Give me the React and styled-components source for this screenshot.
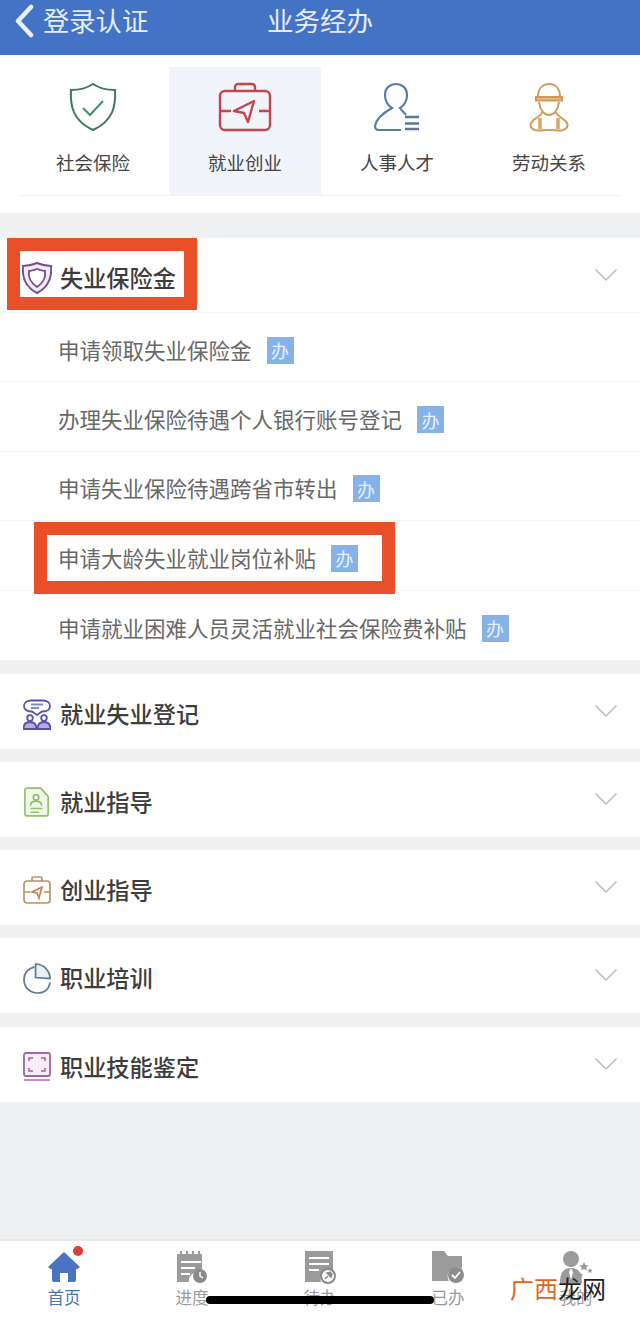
import React from "react";
import styled, { createGlobalStyle } from "styled-components";

const Global = createGlobalStyle`
  html, body { margin: 0; padding: 0; background: #eef0f2; }
  * { box-sizing: border-box; }
  body { font-family: "Noto Sans CJK SC", "Noto Sans", sans-serif; }
`;

const Page = styled.div`
  position: relative;
  width: 640px;
  height: 1317px;
  overflow: hidden;
  display: flex;
  flex-direction: column;
  background: #eef0f2;
`;

const Header = styled.header`
  height: 55px;
  flex: none;
  display: grid;
  grid-template-columns: 1fr auto 1fr;
  align-items: start;
  background: #4473c5;
  color: #e4ecf8;
  font-size: 26.3px;
  line-height: 40px;
`;
const Back = styled.div`
  display: flex;
  align-items: flex-start;
  gap: 9px;
  padding-left: 15px;
  svg { margin-top: 4px; }
`;
const Title = styled.div`
  font-size: 26.5px;
`;

const TabPanel = styled.section`
  flex: none;
  height: 158px;
  background: #fff;
  padding-top: 12px;
  margin-bottom: 25px;
`;
const Tabs = styled.div`
  display: grid;
  grid-template-columns: repeat(4, 152px);
  padding-left: 17px;
`;
const Tab = styled.div`
  height: 128px;
  display: flex;
  flex-direction: column;
  align-items: center;
  padding-top: 15px;
  background: ${(p) => (p.$active ? "#f1f4fb" : "transparent")};
  color: #444;
  font-size: 18.5px;
  line-height: 26px;
  svg { display: block; margin-bottom: 17px; }
`;
const TabRule = styled.div`
  height: 1px;
  margin: 0 20px;
  background: #f0f1f3;
`;

const Section = styled.section`
  flex: none;
  background: #fff;
  margin-bottom: ${(p) => p.$gap}px;
`;
const SectionHead = styled.div`
  height: 75px;
  display: flex;
  align-items: center;
  padding: 0 22px;
  gap: 8px;
  color: #3d3d3d;
  font-size: 23.2px;
  font-weight: 500;
  border-bottom: ${(p) => (p.$open ? "1px solid #f3f4f5" : "none")};
  svg.chev { flex: none; margin-left: auto; }
`;
const LeadSlot = styled.span`
  flex: none;
  width: 30px;
  display: flex;
  justify-content: center;
  margin-top: 6px;
`;
const HeadText = styled.span`
  margin-top: 4px;
`;
const Row = styled.div`
  height: 69.4px;
  display: flex;
  align-items: center;
  gap: 15px;
  padding: 6px 0 0 58px;
  color: #686868;
  font-size: 21.5px;
  border-bottom: 1px solid #f3f4f5;
  &:last-child { border-bottom: none; }
`;
const RowText = styled.span`
  margin-top: -2px;
`;
const Badge = styled.span`
  width: 27px;
  height: 27px;
  display: flex;
  align-items: center;
  justify-content: center;
  background: #85b3e8;
  color: #e8f1fb;
  font-size: 18px;
  line-height: 1;
`;

const Filler = styled.div`
  flex: 1;
`;

const TabBar = styled.nav`
  flex: none;
  height: 78px;
  display: grid;
  grid-template-columns: repeat(5, 128px);
  background: #fff;
  border-top: 2px solid #e9e9e9;
`;
const NavItem = styled.div`
  position: relative;
  display: flex;
  flex-direction: column;
  align-items: center;
  padding-top: 9px;
  color: ${(p) => (p.$active ? "#4a76b8" : "#9a9a9a")};
  font-size: 16.5px;
  line-height: 22px;
  svg { display: block; margin-bottom: 2px; }
`;
const Dot = styled.span`
  position: absolute;
  left: 73px;
  top: 5px;
  width: 10px;
  height: 10px;
  border-radius: 50%;
  background: #d5413a;
`;

const Callout = styled.div`
  position: absolute;
  left: ${(p) => p.$x}px;
  top: ${(p) => p.$y}px;
  width: ${(p) => p.$w}px;
  height: ${(p) => p.$h}px;
  border: 13px solid #e8502a;
`;
const HomeBar = styled.div`
  position: absolute;
  left: 206px;
  top: 1296px;
  width: 228px;
  height: 8px;
  border-radius: 4px;
  background: #000;
`;
const Watermark = styled.div`
  position: absolute;
  left: 510px;
  top: 1271px;
  font-size: 24px;
  line-height: 34px;
  color: #222;
  white-space: nowrap;
`;
const Orange = styled.span`
  color: #e0651f;
`;

const Chevron = () => (
  <svg className="chev" width="24" height="14" viewBox="0 0 24 14" fill="none" stroke="#bcbcbc" strokeWidth="1.5">
    <path d="M1.5 1.5 12 12 22.5 1.5" />
  </svg>
);

const ShieldTab = () => (
  <svg width="48" height="50" viewBox="0 0 48 50" fill="none" stroke="#3f7a5c" strokeWidth="2">
    <path d="M24 2 C30 6 38 8 46 8 C47 24 44 39 24 48 C4 39 1 24 2 8 C10 8 18 6 24 2Z" />
    <path d="M14 26 L21 33 L34 19" stroke="#4b8a68" />
  </svg>
);
const CaseTab = () => (
  <svg width="54" height="50" viewBox="0 0 54 50" fill="none" stroke="#c4464c" strokeWidth="2.4">
    <path d="M17 9V5a3 3 0 0 1 3-3h14a3 3 0 0 1 3 3v4" />
    <rect x="2" y="9" width="50" height="39" rx="5" />
    <path d="M2 29h11M41 29h11" />
    <path d="M16 29 L36 19 L30 40 L26 31Z" strokeLinejoin="round" />
  </svg>
);
const PersonTab = () => (
  <svg width="48" height="50" viewBox="0 0 48 50" fill="none" stroke="#5b7ea6" strokeWidth="2.2">
    <path d="M33 33 C30 29 28 28 27 26 C32 23 34 18 34 13 C34 6 29 2 23 2 C17 2 12 6 12 13 C12 18 14 23 19 26 C12 30 3 36 2 44 C2 47 4 48 6 48 H28" />
    <path d="M32 35h14M32 41.500h14M32 47h14" stroke="#5a7596" strokeWidth="2.4" />
  </svg>
);
const WorkerTab = () => (
  <svg width="40" height="50" viewBox="0 0 40 50" fill="none" stroke="#cf9a5e" strokeWidth="2">
    <path d="M9 15 C9 6 14 2 20 2 C26 2 31 6 31 15" />
    <path d="M7 15h26v3.500H7z" fill="#e5bb88" />
    <path d="M10 20 C11 28 15 33 20 33 C25 33 29 28 30 20" />
    <path d="M13 30 C13 34 5 36 2 41 C0 46 5 49 10 48.500 C15 48 25 48 30 48.500 C35 49 40 46 38 41 C35 36 27 34 27 30" />
    <path d="M11 36v11M29 36v11" strokeWidth="3.500" stroke="#d8a568" />
  </svg>
);

const ShieldLead = () => (
  <svg width="30" height="32" viewBox="0 0 30 32" fill="none">
    <path d="M15 1 C20 3 25 4 29 4 C30 15 27 25 15 31 C3 25 0 15 1 4 C5 4 10 3 15 1Z" fill="#f2e8f6" stroke="#6f4f94" strokeWidth="2" />
    <path d="M15 7 C18 8 21 9 23 9 C24 16 21 21 15 25 C9 21 6 16 7 9 C9 9 12 8 15 7Z" fill="#fff" stroke="#6f4f94" strokeWidth="1.800" />
  </svg>
);
const TalkLead = () => (
  <svg width="28" height="31" viewBox="0 0 28 31" fill="none" stroke="#5a4fa8" strokeWidth="1.800">
    <path d="M8 1.500h12c4 0 7 2 7 5.500s-3 5.500-7 5.500h-1l-5 3.500-5-3.500H8c-4 0-7-2-7-5.500S4 1.500 8 1.500Z" />
    <path d="M8 5.500h12M8 9h8" stroke="#7a90c4" />
    <circle cx="7" cy="19" r="2.800" />
    <circle cx="21" cy="19" r="2.800" />
    <path d="M0.500 30c0-5 3-7 6.500-7s6.500 2 6.500 7ZM14.500 30c0-5 3-7 6.500-7s6.500 2 6.500 7Z" fill="#b3adde" />
  </svg>
);
const DocLead = () => (
  <svg width="26" height="32" viewBox="0 0 28 32" fill="#f0f7e8" stroke="#97bd73" strokeWidth="1.800">
    <path d="M3 1h15l8 9v19a2 2 0 0 1-2 2H3a2 2 0 0 1-2-2V3a2 2 0 0 1 2-2Z" />
    <circle cx="13" cy="11" r="3" fill="none" />
    <path d="M7 20c0-4 3-5 6-5s6 1 6 5M7 23h13M7 27h9" fill="none" />
  </svg>
);
const CaseLead = () => (
  <svg width="28" height="28" viewBox="0 0 28 28" fill="none" stroke="#b89468" strokeWidth="1.700">
    <path d="M9 5V2.500a1.500 1.500 0 0 1 1.500-1.500h7A1.500 1.500 0 0 1 19 2.500V5" />
    <rect x="1" y="5" width="26" height="22" rx="3" />
    <path d="M1 16h6M21 16h6" />
    <path d="M9 16 L19 11 L16 22 L14 17Z" stroke="#c8834a" />
  </svg>
);
const PieLead = () => (
  <svg width="29" height="31" viewBox="0 0 30 32" fill="none" stroke="#66788f" strokeWidth="1.800">
    <path d="M12 4 C5 6 1 11 1 17 C1 25 7 31 15 31 C22 31 27 27 28 20" />
    <path d="M13 1 C21 1 28 8 28 16 L13 15Z" fill="#eaf0f6" />
  </svg>
);
const FrameLead = () => (
  <svg width="28" height="30" viewBox="0 0 28 30" fill="none" stroke="#a5669e" strokeWidth="1.800">
    <rect x="1" y="1" width="26" height="23" rx="2" fill="#f7eef6" />
    <path d="M6 9V6h4M18 6h4v3M22 16v3h-4M10 19H6v-3" strokeWidth="1.600" />
    <path d="M1 28h26" strokeWidth="2" stroke="#c58dbd" />
  </svg>
);

const HomeIcon = () => (
  <svg width="34" height="34" viewBox="0 0 34 34" fill="#4a73c2">
    <path d="M17 2 L33 17 L30 19.500 L17 8 L4 19.500 L1 17Z" />
    <path d="M5 17 L17 7 L29 17 V30 a2 2 0 0 1-2 2 H21 V23 H13 V32 H7 a2 2 0 0 1-2-2Z" />
  </svg>
);
const NoteIcon = () => (
  <svg width="34" height="34" viewBox="0 0 34 34">
    <path d="M2 4h3V1h2v3h4V1h2v3h4V1h2v3h4V1h2v3h2v19h-8a8 8 0 0 0-5 9H2Z" fill="#9b9b9b" />
    <path d="M6 12h20M6 18h14M6 24h9" stroke="#fff" strokeWidth="2" />
    <circle cx="25" cy="26" r="7" fill="#8a8a8a" />
    <path d="M25 22v4l3 2" stroke="#fff" strokeWidth="1.500" fill="none" />
  </svg>
);
const TodoIcon = () => (
  <svg width="32" height="34" viewBox="0 0 32 34">
    <path d="M1 1h28v20a9 9 0 0 0-12 11H1Z" fill="#9b9b9b" />
    <path d="M5 8h20M5 14h20M5 20h10" stroke="#fff" strokeWidth="2" />
    <circle cx="24" cy="26" r="7" fill="#fff" stroke="#8a8a8a" strokeWidth="2" />
    <path d="M21 29l3-3M23 23l4 4 1-3-2-2Z" stroke="#8a8a8a" strokeWidth="1.500" fill="#8a8a8a" />
  </svg>
);
const DoneIcon = () => (
  <svg width="34" height="34" viewBox="0 0 34 34">
    <path d="M1 1h12l4 5h14v13a9 9 0 0 0-13 12H1Z" fill="#9b9b9b" />
    <path d="M17 4h14" stroke="#fff" strokeWidth="1.500" />
    <circle cx="25" cy="25" r="8" fill="#8d8d8d" />
    <path d="M21 25l3 3 5-6" stroke="#fff" strokeWidth="1.800" fill="none" />
  </svg>
);
const MeIcon = () => (
  <svg width="34" height="34" viewBox="0 0 34 34" fill="#9b9b9b">
    <circle cx="12" cy="9" r="8" />
    <path d="M1 33c0-10 3-15 11-15s10 4 11 15Z" />
    <path d="M12 18l-2 4 2 8 2-8Z" fill="#fff" />
    <path d="M25 12l1.500 3 3 .5-2.200 2 .5 3-2.800-1.500-2.800 1.500.5-3-2.200-2 3-.5Z" />
    <path d="M21 22l1 2 2.200.3-1.600 1.500.4 2.200-2-1-2 1 .4-2.200-1.600-1.500 2.200-.3Z" />
    <path d="M31 18l.8 1.700 1.900.2-1.400 1.300.4 1.800-1.700-.9-1.700.9.4-1.800-1.400-1.300 1.900-.2Z" />
  </svg>
);

const openRows = [
  "申请领取失业保险金",
  "办理失业保险待遇个人银行账号登记",
  "申请失业保险待遇跨省市转出",
  "申请大龄失业就业岗位补贴",
  "申请就业困难人员灵活就业社会保险费补贴",
];

const closed = [
  { title: "就业失业登记", Icon: TalkLead, gap: 13 },
  { title: "就业指导", Icon: DocLead, gap: 13 },
  { title: "创业指导", Icon: CaseLead, gap: 13 },
  { title: "职业培训", Icon: PieLead, gap: 14 },
  { title: "职业技能鉴定", Icon: FrameLead, gap: 0 },
];

const tabs = [
  { label: "社会保险", Icon: ShieldTab },
  { label: "就业创业", Icon: CaseTab, active: true },
  { label: "人事人才", Icon: PersonTab },
  { label: "劳动关系", Icon: WorkerTab },
];

const nav = [
  { label: "首页", Icon: HomeIcon, active: true },
  { label: "进度", Icon: NoteIcon },
  { label: "待办", Icon: TodoIcon },
  { label: "已办", Icon: DoneIcon },
  { label: "我的", Icon: MeIcon },
];

export default function App() {
  return (
    <Page>
      <Global />
      <Header>
        <Back>
          <svg width="19" height="34" viewBox="0 0 19 34" fill="none" stroke="#e8eff9" strokeWidth="4.500" strokeLinecap="round" strokeLinejoin="round">
            <path d="M16 3 L3 17 L16 31" />
          </svg>
          <span>登录认证</span>
        </Back>
        <Title>业务经办</Title>
        <span />
      </Header>

      <TabPanel>
        <Tabs>
          {tabs.map(({ label, Icon, active }) => (
            <Tab key={label} $active={active}>
              <Icon />
              {label}
            </Tab>
          ))}
        </Tabs>
        <TabRule />
      </TabPanel>

      <Section $gap={14}>
        <SectionHead $open>
          <LeadSlot><ShieldLead /></LeadSlot>
          <HeadText>失业保险金</HeadText>
          <Chevron />
        </SectionHead>
        {openRows.map((t) => (
          <Row key={t}>
            <RowText>{t}</RowText>
            <Badge>办</Badge>
          </Row>
        ))}
      </Section>

      {closed.map(({ title, Icon, gap }) => (
        <Section key={title} $gap={gap}>
          <SectionHead>
            <LeadSlot><Icon /></LeadSlot>
            <HeadText>{title}</HeadText>
            <Chevron />
          </SectionHead>
        </Section>
      ))}

      <Filler />

      <TabBar>
        {nav.map(({ label, Icon, active }) => (
          <NavItem key={label} $active={active}>
            <Icon />
            {label}
            {active && <Dot />}
          </NavItem>
        ))}
      </TabBar>

      <Callout $x={7} $y={238} $w={190} $h={72} />
      <Callout $x={34} $y={522} $w={361} $h={72} />
      <HomeBar />
      <Watermark>
        <Orange>广西</Orange>龙网
      </Watermark>
    </Page>
  );
}
